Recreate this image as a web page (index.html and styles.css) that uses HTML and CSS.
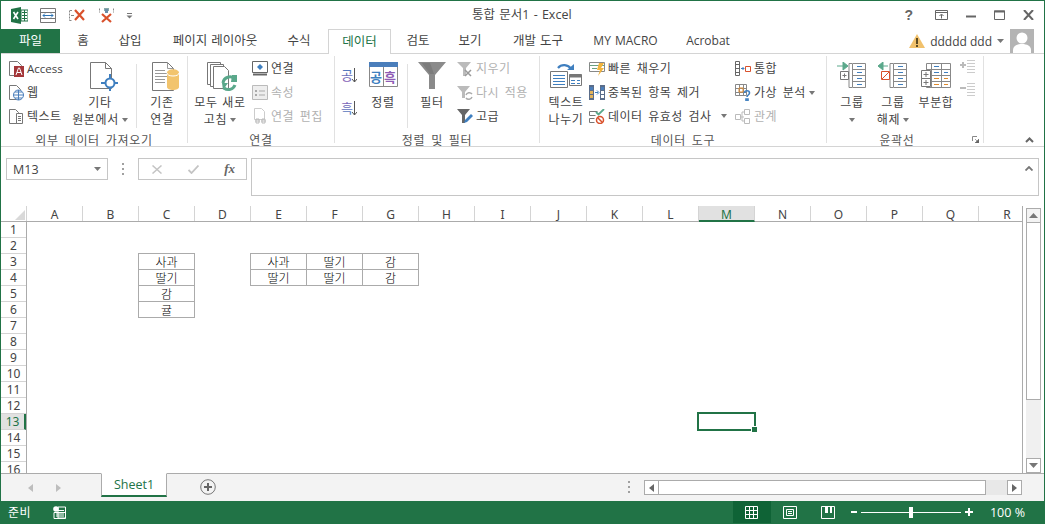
FILE: index.html
```html
<!DOCTYPE html>
<html lang="ko">
<head>
<meta charset="utf-8">
<title>통합 문서1 - Excel</title>
<link rel="stylesheet" href="styles.css">
</head>
<body>
<div class="app">
  <header class="titlebar">
    <div class="qat">
      <svg class="ic-logo" width="17" height="17" viewBox="0 0 17 17"><path d="M0 2 10 0v17L0 15z" fill="#217346"/><path d="M10 3h7v11h-7z" fill="#fff" stroke="#217346"/><path d="M11 5.500h5M11 8.500h5M11 11.500h5M13.500 3v11" stroke="#217346"/><path d="M2.500 5 7 12M7 5l-4.500 7" stroke="#fff" stroke-width="1.600"/></svg>
      <svg class="ic-q" width="16" height="15" viewBox="0 0 16 15"><path d="M.5.500h15v14H.5zM.5 4.500h15M.5 10.500h15" fill="none" stroke="#777"/><path d="M3 7.500h10M3 7.500l2-2M3 7.500l2 2M13 7.500l-2-2M13 7.500l-2 2" fill="none" stroke="#2e75b5"/></svg>
      <svg class="ic-q" width="17" height="15" viewBox="0 0 17 15"><path d="M3 2.500H.5M.5 12.500H3M.5 2.500v10" fill="none" stroke="#888" stroke-dasharray="2 1"/><path d="M2 7.500h3" stroke="#888"/><path d="M6 2l9 10M15 2l-9 10" stroke="#d9512c" stroke-width="2.200"/></svg>
      <svg class="ic-q ic-q-last" width="15" height="15" viewBox="0 0 15 15"><path d="M.5.500v4M14.500.500v4" stroke="#888" stroke-dasharray="2 1"/><path d="M5 0v3h5V0z" fill="#8aa"/><path d="M7.500 1v4" stroke="#6a8da8" stroke-width="3"/><path d="M3 6l9 8M12 6l-9 8" stroke="#d9512c" stroke-width="2.200"/></svg>
      <svg class="ic-drop" width="7" height="6" viewBox="0 0 7 6"><path d="M1 .500h5" stroke="#777"/><path d="M.5 2.500h6l-3 3z" fill="#777"/></svg>
    </div>
    <div class="doc-title">통합 문서1 - Excel</div>
    <div class="winctl">
      <span class="help">?</span>
      <svg width="13" height="10" viewBox="0 0 13 10"><path d="M.5.500h12v9H.5z" fill="none" stroke="#666"/><path d="M.5 2.500h12M6.500 8.500v-4M4.500 6l2-2 2 2" fill="none" stroke="#666"/></svg>
      <svg width="10" height="10" viewBox="0 0 10 10"><path d="M0 6.500h10" stroke="#666" stroke-width="2"/></svg>
      <svg width="11" height="10" viewBox="0 0 11 10"><path d="M.5 1h10v8.500H.5z" fill="none" stroke="#666"/><path d="M0 1.500h11" stroke="#666" stroke-width="2"/></svg>
      <svg width="11" height="10" viewBox="0 0 11 10"><path d="M1 0l9 10M10 0 1 10" stroke="#666" stroke-width="2"/></svg>
    </div>
  </header>

  <nav class="tabs">
    <div class="tab tab-file">파일</div>
    <div class="tab w46">홈</div>
    <div class="tab w48">삽입</div>
    <div class="tab w122">페이지 레이아웃</div>
    <div class="tab w46">수식</div>
    <div class="tab tab-on">데이터</div>
    <div class="tab w54">검토</div>
    <div class="tab w50">보기</div>
    <div class="tab w86">개발 도구</div>
    <div class="tab w89">MY MACRO</div>
    <div class="tab w76">Acrobat</div>
    <div class="user">
      <svg width="16" height="14" viewBox="0 0 16 14"><path d="M8 0l8 14H0z" fill="#f1c16c"/><path d="M7 4h2v6H7zM7 11h2v2H7z" fill="#5c4a22"/></svg>
      <span class="user-name">ddddd ddd</span>
      <svg class="user-caret" width="7" height="4" viewBox="0 0 7 4"><path d="M0 0h7L3.500 4z" fill="#777"/></svg>
      <svg class="avatar" width="24" height="24" viewBox="0 0 24 24"><path d="M0 0h24v24H0z" fill="#b4b4b4"/><circle cx="12" cy="9" r="5.500" fill="#fff"/><path d="M3 24v-3c0-4 4-6 9-6s9 2 9 6v3z" fill="#fff"/></svg>
    </div>
  </nav>

  <section class="ribbon">
    <div class="group g1">
      <div class="gbody">
        <div class="smallcol sc1">
          <div class="si"><svg width="15" height="17" viewBox="0 0 15 17"><path d="M.5 1.500h8l4 4v10H.5z" fill="#fff" stroke="#777"/><path d="M5 6h10v11H5z" fill="#a4373a"/><path d="M7 15l2.500-7h1l2.500 7M8 12.500h4" fill="none" stroke="#fff"/></svg><span class="latin">Access</span></div>
          <div class="si"><svg width="15" height="17" viewBox="0 0 15 17"><path d="M.5 1.500h7l4 4v10H.5z" fill="#fff" stroke="#777"/><circle cx="9.500" cy="11" r="5" fill="#fff" stroke="#4a7ebb"/><path d="M4.500 11h10M9.500 6v10M6 8h7M6 14h7" stroke="#4a7ebb" fill="none"/></svg><span>웹</span></div>
          <div class="si"><svg width="15" height="17" viewBox="0 0 15 17"><path d="M.5 1.500h6l3 3v11H.5z" fill="#fff" stroke="#777"/><path d="M7.500 5.500h6v10h-6z" fill="#fff" stroke="#777"/><path d="M9 8.500h3M9 10.500h3M9 12.500h3" stroke="#777"/></svg><span>텍스트</span></div>
        </div>
        <div class="lg w52">
          <div class="lgi lgi-r4"><svg width="28" height="29" viewBox="0 0 28 29"><path d="M.5.500h15l6 6v20H.5z" fill="#fff" stroke="#777"/><path d="M15.500.500v6h6" fill="none" stroke="#777"/><circle cx="20" cy="21" r="4.500" fill="#fff" stroke="#3f7fbf" stroke-width="2"/><path d="M20 12v5M20 25v4M11 21h5M24 21h4" stroke="#3f7fbf" stroke-width="2"/></svg></div>
          <div class="lbl">기타</div>
          <div class="lbl">원본에서 <i class="caret"></i></div>
        </div>
        <div class="vsep vsep1"></div>
        <div class="lg w50">
          <div class="lgi lgi-r4"><svg width="28" height="29" viewBox="0 0 28 29"><path d="M.5.500h15l6 6v22H.5z" fill="#fff" stroke="#777"/><path d="M15.500.500v6h6M3 8.500h10M3 11.500h13M3 14.500h13M3 17.500h10M3 20.500h10" fill="none" stroke="#999"/><path d="M15 11c0-5 12-5 12 0v14c0 4-12 4-12 0z" fill="#f2c46d"/><path d="M15 11c0 4 12 4 12 0" fill="none" stroke="#fff"/></svg></div>
          <div class="lbl">기존</div>
          <div class="lbl">연결</div>
        </div>
      </div>
      <div class="glabel">외부 데이터 가져오기</div>
    </div>

    <div class="group g2">
      <div class="gbody">
        <div class="lg w62">
          <div class="lgi lgi-r2"><svg width="30" height="30" viewBox="0 0 30 30"><path d="M.5.500h13v22H.5z" fill="#fff" stroke="#777"/><path d="M3.500 2.500h13v22h-13z" fill="#fff" stroke="#777"/><path d="M6.500 4.500h11l4 4v18h-15z" fill="#fff" stroke="#777"/><path d="M16 21a7 7 0 0 1 12-4" fill="none" stroke="#5aa88b" stroke-width="3"/><path d="M25 13h5v7h-6z" fill="#5aa88b"/><path d="M28 23a7 7 0 0 1-11 3" fill="none" stroke="#5aa88b" stroke-width="3"/><path d="M15 21h6l-5 7z" fill="#5aa88b"/></svg></div>
          <div class="lbl">모두 새로</div>
          <div class="lbl">고침 <i class="caret"></i></div>
        </div>
        <div class="smallcol sc2">
          <div class="si"><svg width="16" height="15" viewBox="0 0 16 15"><path d="M.5.500h15v11H.5z" fill="#fff" stroke="#666"/><path d="M1 13.500h14" stroke="#666" stroke-width="2"/><path d="M8 3l3 3-3 3-3-3z" fill="#3f7fbf"/></svg><span>연결</span></div>
          <div class="si dim"><svg width="16" height="15" viewBox="0 0 16 15"><path d="M.5.500h15v14H.5z" fill="#eee" stroke="#bbb"/><path d="M3 5h2v2H3zM3 9h2v2H3z" fill="#aaa"/><path d="M7 6h6M7 10h6" stroke="#aaa"/></svg><span>속성</span></div>
          <div class="si dim"><svg width="16" height="16" viewBox="0 0 16 16"><path d="M2.500.500h7l3 3v8h-10z" fill="#fff" stroke="#ccc"/><path d="M3 13h5M9 13h5M4 11h3v4H4zM10 11h3v4h-3z" fill="none" stroke="#bbb"/></svg><span>연결 편집</span></div>
        </div>
      </div>
      <div class="glabel">연결</div>
    </div>

    <div class="group g3">
      <div class="gbody">
        <div class="sortcol">
          <svg width="16" height="24" viewBox="0 0 16 24"><defs><linearGradient id="gA" x1="0" y1="0" x2="0" y2="1"><stop offset="0" stop-color="#3f7fbf"/><stop offset="1" stop-color="#8e5cb5"/></linearGradient></defs><text class="sorttxt" x="0" y="17" fill="url(#gA)">공</text><path d="M13.500 5v14M11 16l2.500 3 2.500-3" fill="none" stroke="#555"/></svg>
          <svg width="16" height="24" viewBox="0 0 16 24"><defs><linearGradient id="gB" x1="0" y1="0" x2="0" y2="1"><stop offset="0" stop-color="#8e5cb5"/><stop offset="1" stop-color="#3f7fbf"/></linearGradient></defs><text class="sorttxt" x="0" y="17" fill="url(#gB)">흑</text><path d="M13.500 5v14M11 16l2.500 3 2.500-3" fill="none" stroke="#555"/></svg>
        </div>
        <div class="lg w36">
          <div class="lgi"><svg width="29" height="25" viewBox="0 0 29 25"><path d="M.5.500h28v24H.5z" fill="#fff" stroke="#888"/><path d="M0 0h29v5H0z" fill="#4a7ebb"/><path d="M14.500 5v19" stroke="#888"/><text class="sorttxt2" x="1" y="20" fill="#3f7fbf">공</text><text class="sorttxt2" x="15" y="20" fill="#8e5cb5">흑</text></svg></div>
          <div class="lbl">정렬</div>
        </div>
        <div class="vsep vsep3"></div>
        <div class="lg w48">
          <div class="lgi"><svg width="28" height="27" viewBox="0 0 28 27"><path d="M0 0h28L17 13v14h-6V13z" fill="#8a8a8a"/><path d="M4 1h8L16 12h-4z" fill="#6e6e6e" opacity=".5"/></svg></div>
          <div class="lbl">필터</div>
        </div>
        <div class="smallcol sc3">
          <div class="si dim"><svg width="16" height="16" viewBox="0 0 16 16"><path d="M0 1h14L9 7v8H6V7z" fill="#bbb"/><path d="M8 9l6 6M14 9l-6 6" stroke="#999" stroke-width="1.500"/></svg><span>지우기</span></div>
          <div class="si dim"><svg width="16" height="16" viewBox="0 0 16 16"><path d="M0 1h13L8 7v6H5V7z" fill="#bbb"/><path d="M9 10a3.500 3.500 0 0 1 6-1M15 12a3.500 3.500 0 0 1-6 1" fill="none" stroke="#aaa" stroke-width="1.500"/></svg><span>다시 적용</span></div>
          <div class="si"><svg width="16" height="16" viewBox="0 0 16 16"><path d="M0 1h13L8 7v8H5V7z" fill="#666"/><path d="M7 15l1-3 6-6 2 2-6 6z" fill="#3f7fbf"/></svg><span>고급</span></div>
        </div>
      </div>
      <div class="glabel">정렬 및 필터</div>
    </div>

    <div class="group g4">
      <div class="gbody">
        <div class="lg w46 lg4">
          <div class="lgi"><svg width="32" height="26" viewBox="0 0 32 26"><path d="M8 6a8 8 0 0 1 13 1" fill="none" stroke="#3f7fbf" stroke-width="2.200"/><path d="M17 8h7V2z" fill="#3f7fbf"/><path d="M.5 9.500h17v16H.5z" fill="#fff" stroke="#777"/><path d="M3 13.500h12M3 16.500h12M3 19.500h12M3 22.500h12" stroke="#3f7fbf"/><path d="M19.500 12.500h12v11h-12z" fill="#fff" stroke="#777"/><path d="M19.500 12.500h12v3h-12z" fill="#777"/><path d="M21 18.500h4M27 18.500h3M21 21.500h4M27 21.500h3" stroke="#3f7fbf"/></svg></div>
          <div class="lbl">텍스트</div>
          <div class="lbl">나누기</div>
        </div>
        <div class="smallcol sc4">
          <div class="si"><svg width="16" height="15" viewBox="0 0 16 15"><path d="M.5 1.500h15v9H.5z" fill="#fff" stroke="#888"/><path d="M.5 4.500h15M3 7.500h5" stroke="#6aa080"/><path d="M10 2h5l-3 5h3l-6 8 2-6H8z" fill="#f2b33d"/></svg><span>빠른 채우기</span></div>
          <div class="si"><svg width="16" height="15" viewBox="0 0 16 15"><path d="M0 0h5v15H0z" fill="#5a6d8a"/><path d="M1 2h3v3H1z" fill="#4a7ebb"/><path d="M1 6h3v3H1zM1 10h3v3H1z" fill="#e3b35a"/><path d="M11 0h5v15h-5z" fill="#5a6d8a"/><path d="M12 2h3v3h-3z" fill="#4a7ebb"/><path d="M12 6h3v3h-3zM12 10h3v3h-3z" fill="#fff"/><path d="M6 7.500h3M8 5.500l2 2-2 2" fill="none" stroke="#3f7fbf"/></svg><span>중복된 항목 제거</span></div>
          <div class="si"><svg width="16" height="15" viewBox="0 0 16 15"><path d="M.5 2.500h8M.5 2.500v4h6M.5 9.500h5M.5 9.500v4h5" fill="none" stroke="#777"/><path d="M7 3l2.500 2.500L15 0" fill="none" stroke="#5aa88b" stroke-width="1.800"/><circle cx="11" cy="11" r="3.500" fill="#fff" stroke="#d9512c" stroke-width="1.500"/><path d="M8.500 8.500l5 5" stroke="#d9512c" stroke-width="1.500"/></svg><span>데이터 유효성 검사</span><i class="caret caret-v"></i></div>
        </div>
        <div class="smallcol sc5">
          <div class="si"><svg width="16" height="15" viewBox="0 0 16 15"><path d="M.5.500h4v14h-4zM.5 3.500h4M.5 7.500h4M.5 11.500h4" fill="none" stroke="#666"/><path d="M6 7.500h3M7.500 6l1.500 1.500L7.500 9" fill="none" stroke="#3f7fbf"/><path d="M10.500 5.500h5v5h-5z" fill="#fff" stroke="#d9512c"/></svg><span>통합</span></div>
          <div class="si"><svg width="16" height="17" viewBox="0 0 16 17"><path d="M.5.500h11v11H.5zM.5 4.500h11M.5 8.500h11M4.500.500v11M8.500.500v11" fill="#fff" stroke="#888"/><path d="M4 4h4v4H4z" fill="none" stroke="#e08a2c"/><path d="M9.500 9c0-3 5-3 5 0 0 2-2.500 2-2.500 4M11 15h2v2h-2z" fill="none" stroke="#3f7fbf" stroke-width="1.600"/></svg><span>가상 분석</span><i class="caret caret-g"></i></div>
          <div class="si dim"><svg width="16" height="15" viewBox="0 0 16 15"><path d="M.5 5.500h5v5h-5zM9.500.500h5v5h-5zM9.500 9.500h5v5h-5zM6 8h3M9 3H7v9h2" fill="#fff" stroke="#bbb"/></svg><span>관계</span></div>
        </div>
      </div>
      <div class="glabel">데이터 도구</div>
    </div>

    <div class="group g5">
      <div class="gbody">
        <div class="lg w40">
          <div class="lgi"><svg width="31" height="26" viewBox="0 0 31 26"><path d="M0 4h9M6 0l5 4-5 4z" fill="#5aa88b" stroke="#5aa88b"/><path d="M15 1.500h-3v24h3" fill="none" stroke="#888"/><path d="M15.500 1.500h13v24h-13zM15.500 7.500h13M15.500 13.500h13M15.500 19.500h13" fill="#fff" stroke="#888"/><path d="M20 4.500h5M20 10.500h5M20 16.500h5M20 22.500h5" stroke="#3f7fbf"/><path d="M3.500 9.500h8v8h-8z" fill="#fff" stroke="#777"/><path d="M5.500 13.500h4M7.500 11.500v4" stroke="#777"/></svg></div>
          <div class="lbl">그룹</div>
          <div class="lbl"><i class="caret"></i></div>
        </div>
        <div class="lg w42">
          <div class="lgi"><svg width="31" height="26" viewBox="0 0 31 26"><path d="M10 4H2M5 0 0 4l5 4z" fill="#5aa88b" stroke="#5aa88b"/><path d="M15 1.500h-3v24h3" fill="none" stroke="#888"/><path d="M15.500 1.500h13v24h-13zM15.500 7.500h13M15.500 13.500h13M15.500 19.500h13" fill="#fff" stroke="#888"/><path d="M20 4.500h5M20 10.500h5M20 16.500h5M20 22.500h5" stroke="#3f7fbf"/><path d="M3.500 9.500h8v8h-8z" fill="#fff" stroke="#d9512c"/><path d="M4 17l7-7" stroke="#d9512c"/></svg></div>
          <div class="lbl">그룹</div>
          <div class="lbl">해제 <i class="caret"></i></div>
        </div>
        <div class="lg w44">
          <div class="lgi"><svg width="30" height="26" viewBox="0 0 30 26"><path d="M5.500 1.500h24v24h-24z" fill="#fff" stroke="#888"/><path d="M5.500 7.500h24M5.500 13.500h24M5.500 19.500h24M10.500 1.500v24M20.500 1.500v24" fill="none" stroke="#888"/><path d="M13 4.500h5M13 10.500h5M23 10.500h4" stroke="#3f7fbf"/><path d="M13 16.500h5M23 16.500h4M13 22.500h5M23 22.500h4" stroke="#e08a2c"/><path d="M.5 8.500h9v8h-9zM.5 16.500h9v8h-9z" fill="#fff" stroke="#777"/><path d="M2.500 12.500h5M5 10v5M2.500 20.500h5M5 18v5" stroke="#777"/></svg></div>
          <div class="lbl">부분합</div>
        </div>
        <div class="outlinecol">
          <svg width="15" height="15" viewBox="0 0 15 15"><path d="M0 5h6M3 2v6" stroke="#bbb" stroke-width="2"/><path d="M7 .500h8M7 3.500h8M7 6.500h8M7 9.500h8M7 12.500h8" stroke="#ccc"/></svg>
          <svg width="15" height="15" viewBox="0 0 15 15"><path d="M0 5h6" stroke="#bbb" stroke-width="2"/><path d="M7 .500h8M7 3.500h8M7 6.500h8M7 9.500h8M7 12.500h8" stroke="#ccc"/></svg>
        </div>
      </div>
      <div class="glabel glabel5">윤곽선</div>
      <svg class="launcher" width="7" height="7" viewBox="0 0 7 7"><path d="M.5 5V.500H5" fill="none" stroke="#888"/><path d="M3 3l3 3M7 3v4H3z" fill="#666" stroke="#666" stroke-width=".6"/></svg>
    </div>
    <svg class="collapse" width="9" height="6" viewBox="0 0 9 6"><path d="M1 5l3.500-3.500L8 5" fill="none" stroke="#666" stroke-width="2"/></svg>
  </section>

  <section class="fbar">
    <div class="namebox"><span>M13</span><svg width="7" height="4" viewBox="0 0 7 4"><path d="M0 0h7L3.500 4z" fill="#777"/></svg></div>
    <div class="fdots"><i></i><i></i><i></i></div>
    <div class="fbtns">
      <svg width="10" height="9" viewBox="0 0 10 9"><path d="M.5.500l9 8M9.500.500l-9 8" stroke="#c4c4c4" stroke-width="1.500"/></svg>
      <svg width="11" height="9" viewBox="0 0 11 9"><path d="M.5 5l3 3L10.500.500" fill="none" stroke="#c4c4c4" stroke-width="1.800"/></svg>
      <span class="fx">fx</span>
    </div>
    <div class="finput"><svg width="8" height="5" viewBox="0 0 8 5"><path d="M.500 4.500 4 1l3.500 3.500" fill="none" stroke="#777" stroke-width="1.800"/></svg></div>
  </section>

  <section class="gridwrap">
    <div class="gridmain">
      <div class="colhead">
        <div class="corner"><svg width="10" height="10" viewBox="0 0 10 10"><path d="M10 0v10H0z" fill="#d9d9d9"/></svg></div>
        <div class="ch">A</div><div class="ch">B</div><div class="ch">C</div><div class="ch">D</div><div class="ch">E</div><div class="ch">F</div><div class="ch">G</div><div class="ch">H</div><div class="ch">I</div><div class="ch">J</div><div class="ch">K</div><div class="ch">L</div><div class="ch ch-on">M</div><div class="ch">N</div><div class="ch">O</div><div class="ch">P</div><div class="ch">Q</div><div class="ch ch-last">R</div>
      </div>
      <div class="gridbody">
        <div class="rowhead">
          <div class="rh">1</div><div class="rh">2</div><div class="rh">3</div><div class="rh">4</div><div class="rh">5</div><div class="rh">6</div><div class="rh">7</div><div class="rh">8</div><div class="rh">9</div><div class="rh">10</div><div class="rh">11</div><div class="rh">12</div><div class="rh rh-on">13</div><div class="rh">14</div><div class="rh">15</div><div class="rh">16</div>
        </div>
        <div class="sheet">
          <div class="cell c3 r3">사과</div>
          <div class="cell c3 r4">딸기</div>
          <div class="cell c3 r5">감</div>
          <div class="cell c3 r6">귤</div>
          <div class="cell c5 r3">사과</div>
          <div class="cell c6 r3">딸기</div>
          <div class="cell c7 r3">감</div>
          <div class="cell c5 r4">딸기</div>
          <div class="cell c6 r4">딸기</div>
          <div class="cell c7 r4">감</div>
          <div class="selection"><i class="handle"></i></div>
        </div>
      </div>
    </div>
    <div class="vscroll">
      <div class="sbtn sbtn-up"><svg width="9" height="5" viewBox="0 0 9 5"><path d="M4.500 0 9 5H0z" fill="#777"/></svg></div>
      <div class="vthumb"></div>
      <div class="vtrack"></div>
      <div class="sbtn sbtn-down"><svg width="9" height="5" viewBox="0 0 9 5"><path d="M0 0h9L4.500 5z" fill="#777"/></svg></div>
    </div>
  </section>

  <section class="sheetbar">
    <div class="nav">
      <svg width="5" height="8" viewBox="0 0 5 8"><path d="M5 0v8L0 4z" fill="#bdbdbd"/></svg>
      <svg width="5" height="8" viewBox="0 0 5 8"><path d="M0 0v8l5-4z" fill="#bdbdbd"/></svg>
    </div>
    <div class="sheettab">Sheet1</div>
    <svg class="addsheet" width="16" height="16" viewBox="0 0 16 16"><circle cx="8" cy="8" r="7.300" fill="none" stroke="#777"/><path d="M8 4v8M4 8h8" stroke="#666" stroke-width="2"/></svg>
    <div class="hdots"><i></i><i></i><i></i></div>
    <div class="hscroll">
      <div class="hbtn hbtn-l"><svg width="5" height="8" viewBox="0 0 5 8"><path d="M5 0v8L0 4z" fill="#666"/></svg></div>
      <div class="hthumb"></div>
      <div class="htrack"></div>
      <div class="hbtn hbtn-r"><svg width="5" height="8" viewBox="0 0 5 8"><path d="M0 0v8l5-4z" fill="#666"/></svg></div>
    </div>
  </section>

  <footer class="status">
    <span class="st-ready">준비</span>
    <svg class="st-macro" width="13" height="13" viewBox="0 0 13 13"><circle cx="3" cy="3" r="2.800" fill="#fff"/><path d="M1 6.500h11.500v6H1z" fill="none" stroke="#fff"/><path d="M5 1h7.500v11H5z" fill="none" stroke="#fff"/><path d="M3 8h8M3 10h8M5 4.500h6" stroke="#fff"/></svg>
    <div class="viewbtns">
      <div class="vb vb-on"><svg width="13" height="13" viewBox="0 0 13 13"><path d="M.5.500h12v12H.5zM.5 4.500h12M.5 8.500h12M4.500.500v12M8.500.500v12" fill="none" stroke="#fff"/></svg></div>
      <div class="vb"><svg width="14" height="13" viewBox="0 0 14 13"><path d="M.5.500h13v12H.5z" fill="none" stroke="#fff"/><path d="M3.500 3.500h7v6h-7zM5 5.500h4M5 7.500h4" fill="none" stroke="#fff"/></svg></div>
      <div class="vb"><svg width="14" height="13" viewBox="0 0 14 13"><path d="M.5.500h13v12H.5z" fill="none" stroke="#fff"/><path d="M4 0h3v7H4zM9 0h2v7H9z" fill="#fff"/></svg></div>
    </div>
    <div class="zoom">
      <i class="zminus"></i>
      <div class="zslider"><i class="zthumb"></i></div>
      <svg class="zplus" width="8" height="8" viewBox="0 0 8 8"><path d="M0 4h8M4 0v8" stroke="#fff" stroke-width="2"/></svg>
    </div>
    <span class="zpct">100 %</span>
  </footer>
</div>
</body>
</html>
```

FILE: styles.css
```css
* { box-sizing: border-box; }
html, body { margin: 0; padding: 0; }
body { width: 1045px; height: 524px; overflow: hidden; background: #fff; }
.app {
  width: 1045px; height: 524px; display: flex; flex-direction: column;
  border: 1px solid #217346; background: #fff; color: #444;
  font: 12px/17px "Open Sans", "Noto Sans CJK KR", sans-serif; word-spacing: 1px;
}
svg { display: block; flex: none; }

.titlebar { height: 28px; display: flex; align-items: center; position: relative; flex: none; }
.qat { display: flex; align-items: center; padding-left: 10px; }
.ic-logo { margin-right: 12px; }
.ic-q { margin-right: 13px; }
.ic-q-last { margin-right: 11px; }
.ic-drop { margin: 2px 0 0 1px; }
.doc-title { position: absolute; left: 471px; top: 5px; font-size: 12.500px; color: #444; white-space: nowrap; }
.winctl { margin-left: auto; display: flex; align-items: center; gap: 18px; padding-right: 10px; }
.help { font: bold 14px/16px "Liberation Sans", sans-serif; color: #666; margin-right: 4px; }

.tabs { height: 25px; display: flex; border-bottom: 1px solid #d4d4d4; flex: none; position: relative; }
.tab { height: 24px; line-height: 24px; text-align: center; white-space: nowrap; font-size: 12.500px; color: #444; flex: none; }
.tab-file { width: 59px; background: #217346; color: #fff; }
.tab-on { width: 63px; height: 25px; margin-left: 6px; background: #fff; color: #217346; border: 1px solid #d4d4d4; border-bottom: 0; line-height: 23px; }
.w46 { width: 46px; } .w48 { width: 48px; } .w122 { width: 122px; } .w54 { width: 54px; }
.w50 { width: 50px; } .w86 { width: 86px; } .w89 { width: 89px; } .w76 { width: 76px; }
.tabs .w89, .tabs .w76 { font-size: 12px; }
.user { margin-left: auto; display: flex; align-items: center; padding-right: 9px; }
.user-name { margin-left: 5px; font-size: 12px; word-spacing: 0; }
.user-caret { margin: 0 6px 0 5px; }
.avatar { margin-right: 1px; }

.ribbon { height: 93px; display: flex; border-bottom: 1px solid #d4d4d4; flex: none; position: relative; }
.group { display: flex; flex-direction: column; border-right: 1px solid #e1e1e1; margin-bottom: 3px; margin-top: 2px; position: relative; flex: none; }
.g1 { width: 187px; } .g2 { width: 147px; } .g3 { width: 205px; } .g4 { width: 287px; } .g5 { width: 157px; }
.gbody { height: 75px; display: flex; flex: none; }
.glabel { height: 12px; text-align: center; font-size: 12px; line-height: 12px; color: #555; letter-spacing: .7px; word-spacing: 2px; white-space: nowrap; margin-top: 4px; }
.glabel5 { padding-right: 16px; }
.smallcol { display: flex; flex-direction: column; flex: none; padding-top: 1px; }
.si { height: 23.750px; display: flex; align-items: center; gap: 3px; white-space: nowrap; font-size: 12px; letter-spacing: .5px; word-spacing: 2px; flex: none; }
.si .latin { font-size: 11.500px; letter-spacing: 0; }
.si.dim { color: #b1b1b1; }
.lg { display: flex; flex-direction: column; align-items: center; flex: none; white-space: nowrap; letter-spacing: .6px; font-size: 12px; }
.lgi { height: 38px; padding-top: 6px; flex: none; }
.lgi-r4 { margin-left: 7px; }
.lgi-r2 { margin-left: 4px; }
.lbl { height: 17px; line-height: 17px; display: flex; align-items: center; gap: 3px; }
.w52 { width: 54px; } .w62 { width: 62px; } .w36 { width: 36px; }
.w40 { width: 40px; } .w42 { width: 42px; } .w44 { width: 44px; }
.vsep { width: 1px; height: 64px; margin-top: 8px; background: #e1e1e1; flex: none; }
.vsep1 { margin-left: 9px; }
.vsep3 { margin-left: 6px; }
.caret { display: inline-block; width: 0; height: 0; border: 3px solid transparent; border-top: 4px solid #777; border-bottom: 0; }
.caret-v { margin-left: 6px; }
.sc1 { width: 75px; padding-left: 8px; }
.sc2 { margin-left: 1px; }
.sc3 { margin-left: 1px; }
.sc4 { width: 146px; }
.g2 .lg { margin-left: 1px; }
.g1 .lg.w52 { margin-left: -3px; }
.sortcol { display: flex; flex-direction: column; gap: 9px; padding: 7px 0 0 6px; width: 30px; flex: none; }
.sorttxt { font-size: 13px; }
.sorttxt2 { font-size: 13px; font-weight: 700; }
.g4 .lg4 { margin-left: 3px; }
.g5 .gbody { padding-left: 5px; }
.outlinecol { display: flex; flex-direction: column; gap: 8px; padding: 4px 0 0 2px; flex: none; }
.launcher { position: absolute; right: 4px; bottom: 0; }
.collapse { position: absolute; right: 10px; top: 83px; }

.fbar { height: 59px; padding: 11px 5px 10px 5px; display: flex; align-items: flex-start; flex: none; }
.namebox { width: 102px; height: 22px; border: 1px solid #c6c6c6; display: flex; align-items: center; justify-content: space-between; padding: 0 6px; font-size: 12.500px; color: #444; flex: none; }
.fdots { width: 30px; height: 22px; display: flex; flex-direction: column; align-items: center; justify-content: center; gap: 3px; flex: none; }
.fdots i, .hdots i { display: block; width: 2px; height: 2px; background: #a0a0a0; }
.fbtns { width: 109px; height: 22px; border: 1px solid #c6c6c6; display: flex; align-items: center; justify-content: space-between; padding: 0 11px 0 13px; flex: none; }
.fx { font: italic 700 13px/16px "Liberation Serif", serif; color: #666; }
.finput { flex: 1; height: 38px; margin-left: 4px; border: 1px solid #c6c6c6; display: flex; justify-content: flex-end; padding: 7px 5px 0 0; }

.gridwrap { height: 267px; display: flex; flex: none; background: #fff; }
.gridmain { width: 1022px; flex: none; display: flex; flex-direction: column; background: #fff; border-right: 1px solid #ababab; overflow: hidden; position: relative; }
.colhead { height: 16px; display: flex; flex: none; border-bottom: 1px solid #ababab; }
.corner { width: 26px; flex: none; display: flex; justify-content: flex-end; align-items: flex-end; padding: 0 1px 1px 0; border-right: 1px solid #d4d4d4; }
.ch { width: 56px; flex: none; text-align: center; line-height: 17px; font-size: 12px; color: #444; border-right: 1px solid #d4d4d4; font-family: "Noto Sans", sans-serif; }
.ch-on { background: #e1e1e1; color: #217346; height: 16px; border-bottom: 2px solid #217346; }
.ch-last { border-right: 0; }
.gridbody { display: flex; flex: 1; min-height: 0; overflow: hidden; }
.rowhead { width: 26px; flex: none; border-right: 1px solid #ababab; }
.rh { height: 16px; text-align: center; line-height: 16px; font-size: 12px; color: #444; border-bottom: 1px solid #d4d4d4; font-family: "Noto Sans", sans-serif; }
.rh-on { background: #e1e1e1; color: #217346; border-right: 2px solid #217346; }
.sheet { display: grid; grid-template-columns: repeat(18, 56px); grid-auto-rows: 16px; flex: none; }
.cell { border: 1px solid #ababab; margin: -1px 0 0 -1px; text-align: center; line-height: 16px; color: #000; font-size: 12px; font-weight: 300; font-family: "Noto Sans CJK KR", sans-serif; overflow: hidden; }
.c3 { grid-column: 3; } .c5 { grid-column: 5; } .c6 { grid-column: 6; } .c7 { grid-column: 7; }
.r3 { grid-row: 3; } .r4 { grid-row: 4; } .r5 { grid-row: 5; } .r6 { grid-row: 6; }
.selection { grid-column: 13; grid-row: 13; margin: -2px -1px -1px -2px; border: 2px solid #217346; position: relative; }
.handle { position: absolute; right: -3px; bottom: -3px; width: 6px; height: 6px; background: #217346; border-left: 1px solid #fff; border-top: 1px solid #fff; }

.vscroll { flex: 1; display: flex; flex-direction: column; padding: 2px 3px 0 3px; }
.sbtn { height: 15px; width: 15px; border: 1px solid #ababab; display: flex; align-items: center; justify-content: center; background: #f3f3f3; flex: none; }
.sbtn-down { background: #fff; }
.vthumb { height: 178px; width: 15px; border: 1px solid #ababab; background: #fff; flex: none; margin-top: -1px; }
.vtrack { flex: 1; width: 15px; background: #f0f0f0; }

.sheetbar { height: 28px; display: flex; align-items: flex-start; background: #f3f3f3; border-top: 1px solid #ababab; flex: none; position: relative; }
.nav { width: 100px; height: 27px; display: flex; align-items: center; gap: 23px; padding-left: 27px; flex: none; }
.sheettab { width: 66px; height: 24px; margin-top: -1px; background: #fff; border: 1px solid #ababab; border-top-color: #fff; border-bottom: 2px solid #217346; text-align: center; line-height: 21px; color: #217346; font-size: 12.500px; font-family: "Open Sans", sans-serif; flex: none; }
.addsheet { margin: 5px 0 0 33px; }
.hdots { margin: 7px 0 0 412px; display: flex; flex-direction: column; gap: 3px; flex: none; }
.hscroll { margin: 6px 0 0 14px; height: 15px; width: 378px; display: flex; flex: none; }
.hbtn { width: 15px; height: 15px; border: 1px solid #ababab; background: #fff; display: flex; align-items: center; justify-content: center; flex: none; }
.hthumb { width: 328px; height: 15px; background: #fff; border: 1px solid #ababab; flex: none; margin-left: -1px; }
.htrack { flex: 1; background: #e8e8e8; }

.status { flex: 1; background: #217346; color: #fff; display: flex; align-items: center; position: relative; min-height: 0; }
.st-ready { margin-left: 7px; font-size: 12px; letter-spacing: .5px; }
.st-macro { margin-left: 22px; }
.viewbtns { margin-left: auto; display: flex; height: 22px; }
.vb { width: 38px; height: 22px; display: flex; align-items: center; justify-content: center; }
.vb-on { background: #0f6336; }
.zoom { display: flex; align-items: center; margin-left: 4px; }
.zminus { display: block; width: 6px; height: 2px; background: #fff; }
.zslider { width: 100px; height: 1px; background: #fff; margin: 0 4px; position: relative; }
.zthumb { position: absolute; left: 48px; top: -5px; width: 4px; height: 11px; background: #fff; }
.zpct { margin: 0 19px 0 17px; font-size: 12.500px; font-family: "Open Sans", sans-serif; word-spacing: 0; white-space: nowrap; }
```
